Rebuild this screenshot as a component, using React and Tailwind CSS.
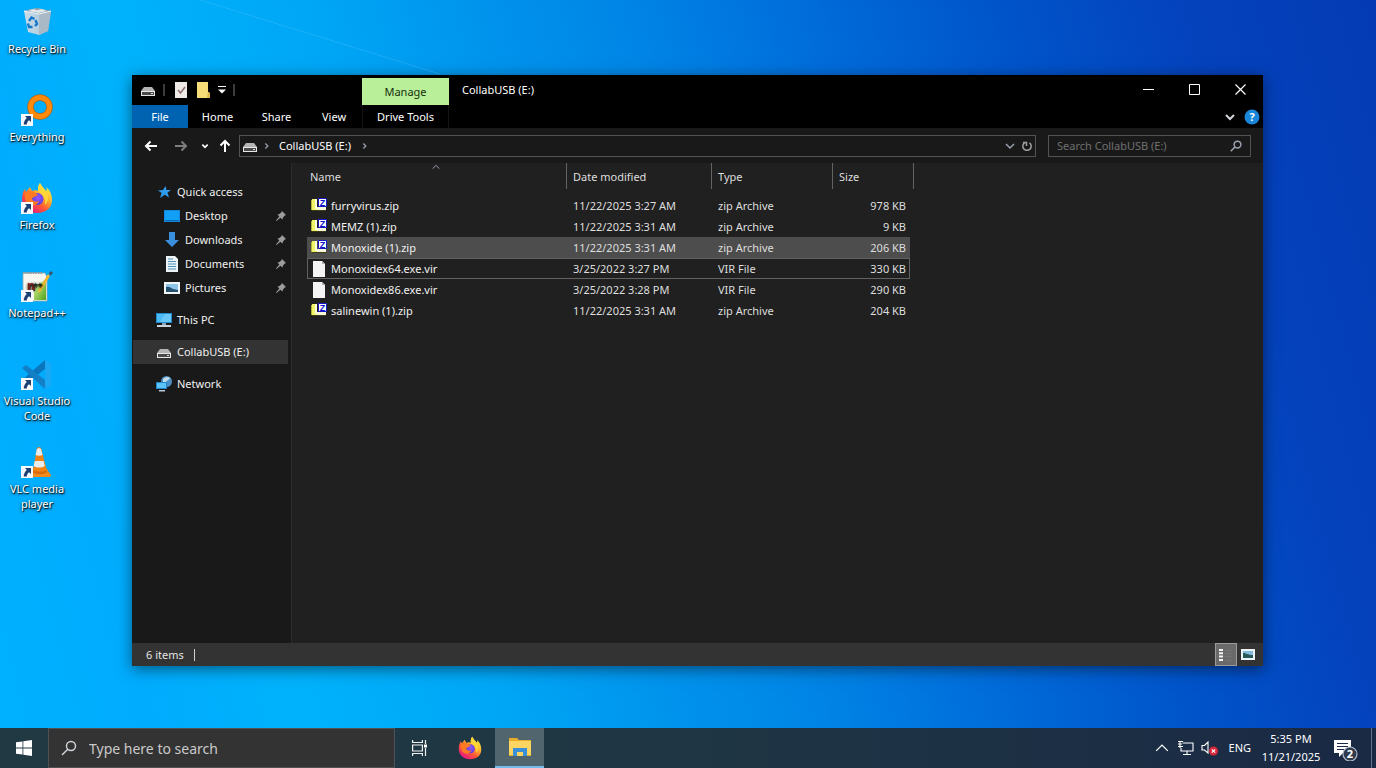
import React, { useState } from 'react';

const FILES = [
  { name: 'furryvirus.zip', modified: '11/22/2025 3:27 AM', type: 'zip Archive', size: '978 KB', icon: 'zip' },
  { name: 'MEMZ (1).zip', modified: '11/22/2025 3:31 AM', type: 'zip Archive', size: '9 KB', icon: 'zip' },
  { name: 'Monoxide (1).zip', modified: '11/22/2025 3:31 AM', type: 'zip Archive', size: '206 KB', icon: 'zip' },
  { name: 'Monoxidex64.exe.vir', modified: '3/25/2022 3:27 PM', type: 'VIR File', size: '330 KB', icon: 'blank' },
  { name: 'Monoxidex86.exe.vir', modified: '3/25/2022 3:28 PM', type: 'VIR File', size: '290 KB', icon: 'blank' },
  { name: 'salinewin (1).zip', modified: '11/22/2025 3:31 AM', type: 'zip Archive', size: '204 KB', icon: 'zip' },
];

/* ---------- desktop icons ---------- */

function RecycleBinIcon() {
  return (
    <svg viewBox="0 0 32 32" className="h-8 w-8">
      <defs>
        <linearGradient id="bin" x1="0" x2="1">
          <stop offset="0" stopColor="#c9dcea" />
          <stop offset="0.6" stopColor="#b4cede" />
          <stop offset="1" stopColor="#93a9b8" />
        </linearGradient>
      </defs>
      <path d="M3 5l13-3 14 3-3 20-9 4-11-3z" fill="url(#bin)" />
      <path d="M3 5l13-3 14 3-12 3z" fill="#7d98a8" />
      <path d="M7 5l5-2 4 1 5-1 5 2-8 2z" fill="#dfe7ea" />
      <path d="M18 8l12-3-3 20-9 4z" fill="#a9bac6" />
      <path d="M3 5l15 3 12-3" fill="none" stroke="#eef5f8" />
      <path d="M8 15l2.500-3.500 3 1.500M14.500 14l1.500 4-2 2M11.500 21H8l-1-3.500" fill="none" stroke="#1577c9" strokeWidth="2.400" />
    </svg>
  );
}

function EverythingIcon() {
  return (
    <svg viewBox="0 0 32 32" className="h-8 w-8">
      <circle cx="19" cy="13" r="9.500" fill="none" stroke="#a8661d" strokeWidth="6.500" />
      <circle cx="19" cy="13" r="9.500" fill="none" stroke="#ff8a0a" strokeWidth="5" />
    </svg>
  );
}

function FirefoxIcon({ id, className }) {
  const shell = `${id}-shell`;
  const core = `${id}-core`;
  return (
    <svg viewBox="0 0 32 32" className={className}>
      <defs>
        <linearGradient id={shell} x1="0.850" y1="0.050" x2="0.200" y2="0.950">
          <stop offset="0" stopColor="#fff44f" />
          <stop offset="0.350" stopColor="#ffb52a" />
          <stop offset="0.650" stopColor="#ff5636" />
          <stop offset="1" stopColor="#e31587" />
        </linearGradient>
        <radialGradient id={core} cx="0.550" cy="0.400" r="0.600">
          <stop offset="0" stopColor="#9059ff" />
          <stop offset="1" stopColor="#5b3ed6" />
        </radialGradient>
      </defs>
      <path
        d="M19 1c1 3 4 5 6 8 1-1 1-3 0-4 4 3 6 8 6 13 0 8-6 13-15 13S1 25 1 17c0-4 1-8 3-10l1 3 4-5 2 4c2-1 5-1 6 0 0-3 0-6 2-8z"
        fill={`url(#${shell})`}
      />
      <circle cx="16.500" cy="17" r="6" fill={`url(#${core})`} />
      <path d="M4 11c3-2 6-3 9-1l4 3c-2 2-5 1-6 4 1 3 5 3 7 2-2 5-8 6-12 2-2-3-3-6-2-10z" fill="#ff7a22" />
      <path d="M19 1c1 3 4 5 6 8 3 5 3 10-1 14 1-6-2-10-7-14 0-3 0-6 2-8z" fill="#ffd83a" opacity="0.850" />
    </svg>
  );
}

function NotepadIcon() {
  return (
    <svg viewBox="0 0 32 32" className="h-8 w-8">
      <defs>
        <linearGradient id="npp" x1="0" y1="0" x2="1" y2="1">
          <stop offset="0" stopColor="#e9f59a" />
          <stop offset="1" stopColor="#4da41c" />
        </linearGradient>
      </defs>
      <path d="M2 3h22l2 4v24H2z" fill="#f7f7f2" stroke="#9aa7a7" strokeWidth="0.800" />
      <path d="M13 18l12-9v21H13z" fill="url(#npp)" />
      <path d="M2 3h20" stroke="#9b9b9b" strokeWidth="2" strokeDasharray="1.500 1" />
      <path d="M27 4l2 2-9 15-3 2 1-4z" fill="#f2b632" />
      <path d="M28 3l2-2 2 2-3 3z" fill="#37536b" />
      <text x="6" y="20" fontSize="12" fontWeight="bold" fill="#7a1d1d" fontFamily="Noto Sans">n</text>
      <text x="12" y="18" fontSize="8" fontWeight="bold" fill="#1b3b1b" fontFamily="Noto Sans">++</text>
    </svg>
  );
}

function VsCodeIcon() {
  return (
    <svg viewBox="0 0 32 32" className="h-8 w-8">
      <path d="M24 2l6 3v23l-6 3z" fill="#39a5ea" opacity="0.450" />
      <path d="M24 2v9L6 25l-5-3z" fill="#0b76bd" />
      <path d="M1 10l4-3 19 15v9z" fill="#127fc6" />
    </svg>
  );
}

function VlcIcon() {
  return (
    <svg viewBox="0 0 32 32" className="h-8 w-8">
      <path d="M6 25l3-3h16l5 7-1 2H7z" fill="#f28a1c" />
      <path d="M16 2l2-1 2 1 6 23c-4 3-11 3-14 0z" fill="#f18316" />
      <path d="M14.500 9l1.500-6 2-1 2 1 1.500 6c-2 1-5 1-7 0zM12.500 20l1.300-5h8.700l1.300 5c-3 2-8.300 2-11.300 0z" fill="#e9ecec" />
      <path d="M11 26l.6-2c3 2 11 2 14 0l.6 2c-3 3-12 3-15.200 0z" fill="#d96a0b" />
    </svg>
  );
}

function ShortcutBadge() {
  return (
    <svg viewBox="0 0 12 12" className="absolute bottom-0 left-0 h-3 w-3">
      <path d="M0 0h12v12H0z" fill="#f6f8fb" />
      <path d="M4 2h6v6L8.200 6.300C6.600 7.300 6 8.500 5.800 10.500H2.800C2.600 8 4 5.500 5.800 4z" fill="#1d4074" />
    </svg>
  );
}

const SHORTCUTS = [
  { label: 'Recycle Bin', icon: <RecycleBinIcon />, link: false },
  { label: 'Everything', icon: <EverythingIcon />, link: true },
  { label: 'Firefox', icon: <FirefoxIcon id="desk" className="h-8 w-8" />, link: true },
  { label: 'Notepad++', icon: <NotepadIcon />, link: true },
  { label: 'Visual Studio Code', icon: <VsCodeIcon />, link: true },
  { label: 'VLC media player', icon: <VlcIcon />, link: true },
];

/* ---------- explorer icons ---------- */

function DriveIcon() {
  return (
    <svg viewBox="0 0 16 16" className="h-4 w-4 shrink-0">
      <path d="M4 5h8l3 4H1z" fill="#b4b4b4" />
      <path d="M1 9h14v5H1z" fill="#e8e8e8" />
      <path d="M2 10h12v3H2z" fill="#4a4a4a" />
      <path d="M11 11h2v1h-2z" fill="#dcdcdc" />
    </svg>
  );
}

function ZipIcon() {
  return (
    <svg viewBox="0 0 16 16" className="h-4 w-4 shrink-0">
      <path d="M1 1h5v11H1z" fill="#f2f268" />
      <path d="M0 2h1v10H0z" fill="#b5b53c" />
      <path d="M4 1h2v10H4z" fill="#fdfde0" />
      <path d="M6 9h9v3H6z" fill="#f6f6d8" />
      <path d="M1 12h14v1H1z" fill="#3c3c18" />
      <path d="M7.500.5h8v8h-8z" fill="#fff" stroke="#1616c4" strokeWidth="1" />
      <text x="11.500" y="7.500" fontSize="9" fontWeight="bold" fill="#1010c8" textAnchor="middle" fontFamily="Liberation Sans">Z</text>
    </svg>
  );
}

function BlankFileIcon() {
  return (
    <svg viewBox="0 0 16 16" className="h-4 w-4 shrink-0">
      <path d="M2 0h9l3 3v13H2z" fill="#f4f4f4" />
      <path d="M11 0l3 3h-3z" fill="#b4b4b4" />
    </svg>
  );
}

function StarIcon() {
  return (
    <svg viewBox="0 0 16 16" className="h-4 w-4 shrink-0">
      <path d="M9.500 2l1 4H15l-3.500 2.600L13 13.500 8.800 10.700 4 14l1.600-5L2 6.400l5-.3z" fill="#2f9bea" />
    </svg>
  );
}

function DesktopIcon() {
  return (
    <svg viewBox="0 0 16 16" className="h-4 w-4 shrink-0">
      <path d="M0 2h16v12H0z" fill="#1488dd" />
      <path d="M1 3h14v9H1z" fill="#12a0f6" />
      <path d="M1 12h14v1H1z" fill="#0a69b4" />
    </svg>
  );
}

function DownloadsIcon() {
  return (
    <svg viewBox="0 0 16 16" className="h-4 w-4 shrink-0">
      <path d="M5 0h6v8h4l-7 7-7-7h4z" fill="#3a8fdc" />
    </svg>
  );
}

function DocumentsIcon() {
  return (
    <svg viewBox="0 0 16 16" className="h-4 w-4 shrink-0">
      <path d="M2 0h9l3 3v13H2z" fill="#eef3f6" />
      <path d="M4 3h5M4 5.500h8M4 8h8M4 10.500h8M4 13h8" stroke="#4a90b8" strokeWidth="1.200" />
    </svg>
  );
}

function PicturesIcon() {
  return (
    <svg viewBox="0 0 16 16" className="h-4 w-4 shrink-0">
      <path d="M0 2h16v12H0z" fill="#f1f5f8" />
      <path d="M2 4h12v8H2z" fill="#8cc4ea" />
      <path d="M2 7c3-1 5 1 7 2l5 1v2H2z" fill="#25506e" />
    </svg>
  );
}

function PcIcon() {
  return (
    <svg viewBox="0 0 16 16" className="h-4 w-4 shrink-0">
      <path d="M0 1h16v10H0z" fill="#1f8ad0" />
      <path d="M1 2h14v8H1z" fill="#4cb9f3" />
      <path d="M9 2h6v8H4z" fill="#7fd0fa" opacity="0.600" />
      <path d="M6 11h4v2H6z" fill="#8aa5b5" />
      <path d="M1 13h14v2H1z" fill="#c9d3d8" />
    </svg>
  );
}

function NetworkIcon() {
  return (
    <svg viewBox="0 0 16 16" className="h-4 w-4 shrink-0">
      <circle cx="10.500" cy="5.500" r="5.500" fill="#4c8fc4" />
      <path d="M7 3c2-2 5-3 7-1-1 2-3 2-4 4H7z" fill="#c3dcec" />
      <path d="M0 6h11v7H0z" fill="#1f84cc" />
      <path d="M1 7h9v5H1z" fill="#5cc3f7" />
      <path d="M3 14h6v1.500H3z" fill="#b9c9d2" />
    </svg>
  );
}

function PinIcon() {
  return (
    <svg viewBox="0 0 12 12" className="h-3 w-3 shrink-0">
      <path d="M7 1l4 4-1.200.6L8 7.500l-.5 2L5.400 7.700 1.500 11l-.5-.5 3.300-3.900L2.500 4.500l2-.5 1.900-1.800z" fill="#9c9c9c" />
    </svg>
  );
}

function Chevron({ className, d = 'M2 4l4 4 4-4', weight = 1.5 }) {
  return (
    <svg viewBox="0 0 12 12" className={className} fill="none" stroke="currentColor" strokeWidth={weight}>
      <path d={d} />
    </svg>
  );
}

function ArrowIcon({ d, className }) {
  return (
    <svg viewBox="0 0 16 16" className={className} fill="none" stroke="currentColor" strokeWidth="2">
      <path d={d} />
    </svg>
  );
}

function SearchIcon({ className, weight }) {
  return (
    <svg viewBox="0 0 16 16" className={className} fill="none" stroke="currentColor" strokeWidth={weight}>
      <circle cx="10" cy="6" r="4.500" />
      <path d="M6.800 9.200L1 15" />
    </svg>
  );
}

const FILE_ICONS = { zip: <ZipIcon />, blank: <BlankFileIcon /> };

const QUICK_ACCESS = [
  { label: 'Desktop', icon: <DesktopIcon /> },
  { label: 'Downloads', icon: <DownloadsIcon /> },
  { label: 'Documents', icon: <DocumentsIcon /> },
  { label: 'Pictures', icon: <PicturesIcon /> },
];

function TitleBar() {
  return (
    <header className="flex bg-black text-white">
      <div className="flex h-[30px] w-[230px] items-center pl-2">
        <DriveIcon />
        <span className="ml-[7px] h-3 w-[2px] bg-[#3c3c3c]" />
        <button aria-label="Properties" className="ml-[9px]">
          <svg viewBox="0 0 14 16" className="h-4 w-[14px]">
            <path d="M1 0h12v16H1z" fill="#eeeae8" />
            <path d="M4 8l2.500 3L11 5" fill="none" stroke="#8c6f6c" strokeWidth="1.500" />
          </svg>
        </button>
        <button aria-label="New folder" className="ml-2">
          <svg viewBox="0 0 14 16" className="h-4 w-[14px]">
            <path d="M1 0h11v10l2 1v5H1z" fill="#f7dd77" />
            <path d="M12 10l2 1v5h-3z" fill="#e0b94c" />
          </svg>
        </button>
        <button aria-label="Customize Quick Access Toolbar" className="ml-[7px]">
          <svg viewBox="0 0 10 10" className="h-[10px] w-[10px]">
            <path d="M1 1.500h8" stroke="#fff" />
            <path d="M1 4.500h8L5 8.500z" fill="#fff" />
          </svg>
        </button>
        <span className="ml-[6px] h-3 w-[2px] bg-[#3c3c3c]" />
      </div>
      <div className="flex w-[87px] items-end">
        <button className="h-[27px] w-full bg-[#b9ef98] text-[#15300c]">Manage</button>
      </div>
      <h1 className="flex-1 pt-[7px] pl-[13px]">CollabUSB (E:)</h1>
      <div className="flex h-[28px]">
        <button aria-label="Minimize" className="flex w-[46px] items-center justify-center">
          <svg viewBox="0 0 11 11" className="h-[11px] w-[11px]" stroke="#fff"><path d="M0 5.500h11" /></svg>
        </button>
        <button aria-label="Maximize" className="flex w-[46px] items-center justify-center">
          <svg viewBox="0 0 11 11" className="h-[11px] w-[11px]" fill="none" stroke="#fff"><path d="M.5.5h10v10H.5z" /></svg>
        </button>
        <button aria-label="Close" className="flex w-[46px] items-center justify-center">
          <svg viewBox="0 0 11 11" className="h-[11px] w-[11px]" stroke="#fff" strokeWidth="1.200"><path d="M.5.5l10 10M10.500.5l-10 10" /></svg>
        </button>
      </div>
    </header>
  );
}

function RibbonTabs() {
  return (
    <div className="flex h-[23px] items-stretch bg-black text-white">
      <button className="w-14 bg-[#0063b1]">File</button>
      <button className="w-[59px]">Home</button>
      <button className="w-[59px]">Share</button>
      <button className="w-14">View</button>
      <button className="w-[87px] border-x border-[#141414]">Drive Tools</button>
      <div className="flex flex-1 items-center justify-end gap-2 pr-[3px]">
        <button aria-label="Expand the Ribbon"><Chevron className="h-3 w-3 text-gray-300" weight={2} /></button>
        <button aria-label="Help">
          <svg viewBox="0 0 16 16" className="h-4 w-4">
            <circle cx="8" cy="8" r="7.500" fill="#1a86d9" />
            <text x="8" y="12" fontSize="11" fontWeight="bold" fill="#fff" textAnchor="middle" fontFamily="Noto Sans">?</text>
          </svg>
        </button>
      </div>
    </div>
  );
}

function AddressBar() {
  return (
    <div className="flex h-[35px] items-center bg-[#191919] pr-3 pl-[11px] text-white">
      <button aria-label="Back"><ArrowIcon className="h-4 w-4" d="M14 8H3M7.500 3.500L3 8l4.500 4.500" /></button>
      <button aria-label="Forward" className="ml-[14px] text-[#7d7d7d]"><ArrowIcon className="h-4 w-4" d="M2 8h11M8.500 3.500L13 8l-4.500 4.500" /></button>
      <button aria-label="Recent locations" className="ml-3"><Chevron className="h-2 w-2" weight={2.5} /></button>
      <button aria-label="Up" className="ml-2"><ArrowIcon className="h-4 w-4" d="M8 14V3M3.500 7.500L8 3l4.500 4.500" /></button>
      <nav aria-label="Address" className="ml-[6px] flex h-[22px] flex-1 items-center border border-[#535353] px-[2px]">
        <DriveIcon />
        <Chevron className="ml-1 h-[10px] w-[10px] text-gray-400" d="M4 3l3 3-3 3" />
        <a href="#drive" className="ml-[7px]">CollabUSB (E:)</a>
        <Chevron className="ml-[9px] h-[10px] w-[10px] text-gray-400" d="M4 3l3 3-3 3" />
        <button aria-label="Previous locations" className="ml-auto"><Chevron className="h-3 w-3 text-gray-400" /></button>
        <button aria-label="Refresh" className="ml-[5px]">
          <svg viewBox="0 0 12 12" className="h-3 w-3" fill="none" stroke="#a0a0a0" strokeWidth="1.500">
            <path d="M8.500 2.800a4.200 4.200 0 1 1-5 0M2 2.500h3.500V6" />
          </svg>
        </button>
      </nav>
      <label className="ml-3 flex h-[22px] w-[203px] items-center border border-[#535353] pr-2 pl-2 text-[#8a8a8a]">
        <input
          type="search"
          aria-label="Search CollabUSB (E:)"
          placeholder="Search CollabUSB (E:)"
          className="min-w-0 flex-1 bg-transparent outline-none placeholder:text-[#6f6f6f]"
        />
        <SearchIcon className="h-3 w-3 text-gray-400" weight={2} />
      </label>
    </div>
  );
}

function Sidebar() {
  return (
    <nav aria-label="Navigation pane" className="flex w-40 shrink-0 flex-col border-r border-[#2b2b2b] bg-[#191919] pt-[17px] pr-[3px] pl-px text-[#f0f0f0]">
      <a href="#quick" className="flex h-6 items-center gap-[5px] pl-[23px]"><StarIcon />Quick access</a>
      {QUICK_ACCESS.map((item) => (
        <a key={item.label} href={`#${item.label}`} className="flex h-6 items-center gap-[5px] pr-px pl-[31px]">
          {item.icon}
          <span className="flex-1">{item.label}</span>
          <PinIcon />
        </a>
      ))}
      <a href="#pc" className="mt-2 flex h-6 items-center gap-[5px] pl-[23px]"><PcIcon />This PC</a>
      <a href="#drive" className="mt-2 flex h-6 items-center gap-[5px] bg-[#333333] pl-[23px]"><DriveIcon />CollabUSB (E:)</a>
      <a href="#network" className="mt-2 flex h-6 items-center gap-[5px] pl-[23px]"><NetworkIcon />Network</a>
    </nav>
  );
}

function FileTable() {
  const [selected, setSelected] = useState('Monoxide (1).zip');
  const focused = 'Monoxidex64.exe.vir';

  const rowStyle = (name) => {
    if (name === selected) return 'bg-[#4d4d4d]';
    if (name === focused) return 'outline -outline-offset-1 outline-[#626262]';
    return '';
  };

  return (
    <div className="min-w-0 flex-1 overflow-hidden bg-[#202020] pl-[15px] text-[#dedede]">
      <table className="w-[607px] table-fixed border-collapse text-left">
        <colgroup>
          <col className="w-[259px]" />
          <col className="w-[145px]" />
          <col className="w-[121px]" />
          <col className="w-[82px]" />
        </colgroup>
        <thead>
          <tr>
            <th className="relative h-8 p-0 pb-[6px] font-normal">
              <Chevron className="absolute -top-px left-[124px] h-[10px] w-[10px] text-gray-400" d="M2 8l4-4 4 4" weight={1.2} />
              <div className="h-[26px] pl-[3px] leading-[28px]">Name</div>
            </th>
            <th className="h-8 p-0 pb-[6px] font-normal"><div className="h-[26px] border-l border-[#636363] pl-[6px] leading-[28px]">Date modified</div></th>
            <th className="h-8 p-0 pb-[6px] font-normal"><div className="h-[26px] border-l border-[#636363] pl-[6px] leading-[28px]">Type</div></th>
            <th className="h-8 p-0 pb-[6px] font-normal"><div className="h-[26px] border-x border-[#636363] pl-[6px] leading-[28px]">Size</div></th>
          </tr>
        </thead>
      </table>
      <table aria-label="Files" className="w-[603px] table-fixed border-collapse text-left">
        <colgroup>
          <col className="w-[259px]" />
          <col className="w-[145px]" />
          <col className="w-[121px]" />
          <col className="w-[78px]" />
        </colgroup>
        <tbody>
          {FILES.map((file) => (
            <tr
              key={file.name}
              onClick={() => setSelected(file.name)}
              className={`h-[21px] ${rowStyle(file.name)}`}
            >
              <td className="p-0">
                <div className="flex items-center gap-1 pl-1 text-[#f0f0f0]">{FILE_ICONS[file.icon]}{file.name}</div>
              </td>
              <td className="p-0 pl-[7px]">{file.modified}</td>
              <td className="p-0 pl-[7px]">{file.type}</td>
              <td className="p-0 pr-1 text-right">{file.size}</td>
            </tr>
          ))}
        </tbody>
      </table>
    </div>
  );
}

function StatusBar() {
  return (
    <footer className="flex h-[23px] items-center bg-[#333333] pl-[14px] text-[#e4e4e4]">
      <span>6 items</span>
      <span className="ml-[10px] h-3 w-px bg-[#d0d0d0]" />
      <button aria-label="Details view" className="ml-auto flex h-[23px] w-[22px] items-center justify-center border border-[#9a9a9a] bg-[#6a6a6a]">
        <svg viewBox="0 0 14 12" className="h-3 w-[14px]" fill="#f5f5f5">
          <path d="M0 0h4v2H0zM0 3.300h4v2H0zM0 6.600h4v2H0zM0 10h4v2H0z" />
          <path d="M6 1h7v.5H6zM6 4h7v.5H6zM6 7.500h7V8H6zM6 11h7v.5H6z" fill="#808080" />
        </svg>
      </button>
      <button aria-label="Large icons view" className="flex h-[23px] w-[26px] items-center pl-1">
        <svg viewBox="0 0 14 12" className="h-3 w-[14px]">
          <path d="M0 0h14v11H0z" fill="#eef3f6" />
          <path d="M2 2h10v7H2z" fill="#83b9dc" />
          <path d="M2 4c3 0 5 2 10 2v3H2z" fill="#285a58" />
        </svg>
      </button>
    </footer>
  );
}

function Explorer() {
  return (
    <section className="mt-[75px] mr-[113px] mb-[62px] ml-[58px] flex min-w-0 flex-1 flex-col bg-[#191919] text-[11px] leading-4 shadow-[0_3px_14px_rgba(0,0,0,0.5)]">
      <TitleBar />
      <RibbonTabs />
      <AddressBar />
      <div className="flex min-h-0 flex-1">
        <Sidebar />
        <FileTable />
      </div>
      <StatusBar />
    </section>
  );
}

/* ---------- taskbar ---------- */

function Taskbar() {
  return (
    <footer className="flex h-10 items-stretch bg-linear-to-r from-[#203942] via-[#1f3644] to-[#1a2944] text-white">
      <button aria-label="Start" className="flex w-12 items-center justify-center">
        <svg viewBox="0 0 16 16" className="h-4 w-4" fill="#fff">
          <path d="M0 2.300l6.500-.9v6.200H0zM7.300 1.300L16 0v7.600H7.300zM0 8.400h6.500v6.200L0 13.700zM7.300 8.400H16V16l-8.700-1.300z" />
        </svg>
      </button>
      <label className="flex w-[347px] items-center gap-3 border border-[#4d5256] bg-[#333333] pl-3 text-gray-300">
        <SearchIcon className="h-4 w-4" weight={1.4} />
        <input
          type="search"
          aria-label="Type here to search"
          placeholder="Type here to search"
          className="min-w-0 flex-1 bg-transparent text-[14px] outline-none placeholder:text-[#cacaca]"
        />
      </label>
      <button aria-label="Task View" className="flex w-[50px] items-center justify-center">
        <svg viewBox="0 0 16 16" className="h-4 w-4" fill="none" stroke="#f0f0f0" strokeWidth="1.200">
          <path d="M.6 0v2.500h9.800V0M.6 5h9.800v6H.6zM.6 16v-2.500h9.800V16M13.500 0v4M13.500 8v8" />
          <path d="M12 4.500h3v3h-3z" fill="#fff" stroke="none" />
        </svg>
      </button>
      <button aria-label="Firefox" className="flex w-[50px] items-center justify-center">
        <FirefoxIcon id="bar" className="h-6 w-6" />
      </button>
      <button aria-label="File Explorer" className="flex w-[49px] items-center justify-center border-b-2 border-[#76b9ed] bg-[#51656f]">
        <svg viewBox="0 0 24 20" className="h-5 w-6">
          <path d="M1 1h8l2 2h12v16H1z" fill="#e6ad2c" />
          <path d="M1 4h22v14H1z" fill="#fcd462" />
          <path d="M5 11h14v8H5z" fill="#3b8fd6" />
          <path d="M9 15h6v4H9z" fill="#fcd462" />
        </svg>
      </button>
      <div className="ml-auto flex items-center text-[11px] leading-[18px]">
        <button aria-label="Show hidden icons"><Chevron className="h-[14px] w-[14px]" d="M1 8.500l5-5 5 5" weight={1.1} /></button>
        <button aria-label="Network" className="ml-2">
          <svg viewBox="0 0 18 16" className="h-4 w-[18px]" fill="none" stroke="#fff" strokeWidth="1.100">
            <path d="M5.500 3H16v8H4V8M1 1.500h5M1 4h4M1 6.500h5M3 1v7M10 11v3M6 14.500h8" />
          </svg>
        </button>
        <button aria-label="Volume muted" className="ml-[6px]">
          <svg viewBox="0 0 18 16" className="h-4 w-[18px]">
            <path d="M1 5.500h2.500L7 2v11L3.500 10H1z" fill="none" stroke="#fff" strokeWidth="1.100" />
            <circle cx="12.500" cy="11" r="4.500" fill="#d9273c" />
            <path d="M10.800 9.300l3.400 3.400M14.200 9.300l-3.400 3.400" stroke="#fff" strokeWidth="1.200" />
          </svg>
        </button>
        <button className="ml-[10px]">ENG</button>
        <button className="ml-[9px] w-[62px] text-center">
          <time className="block">5:35 PM</time>
          <time className="block">11/21/2025</time>
        </button>
        <button aria-label="2 new notifications" className="ml-[11px]">
          <svg viewBox="0 0 26 26" className="h-[26px] w-[26px]">
            <path d="M1 5h17v13h-8l-4 4v-4H1z" fill="#fff" />
            <path d="M4 8.500h11M4 11.500h11M4 14.500h7" stroke="#1a2944" />
            <circle cx="17" cy="19" r="7" fill="#2f3a4d" stroke="#b5bcc8" strokeWidth="1.200" />
            <text x="17" y="23" fontSize="11" fontWeight="bold" fill="#fff" textAnchor="middle" fontFamily="Noto Sans">2</text>
          </svg>
        </button>
        <button aria-label="Show desktop" className="ml-3 h-10 w-[5px] border-l border-[#66728a]" />
      </div>
    </footer>
  );
}

export default function App() {
  return (
    <div className="flex h-screen flex-col overflow-hidden bg-[linear-gradient(75deg,#00b2ff_0%,#00acfe_10%,#00b2fb_20%,#00a6f6_33%,#0092ec_44%,#0086e6_52%,#006cda_64%,#0054ca_76%,#0442bc_88%,#043bb4_100%)] font-['Noto_Sans','Open_Sans',sans-serif]">
      <main className="relative flex min-h-0 flex-1">
        {/* faint wallpaper ray */}
        <svg viewBox="0 0 240 74" className="absolute top-0 left-[200px] h-[74px] w-60" fill="none">
          <path d="M0 0l240 74" stroke="#5cc8ff" opacity="0.300" />
        </svg>
        <div className="flex w-[74px] shrink-0 flex-col pt-[6px]">
          {SHORTCUTS.map((item) => (
            <a
              key={item.label}
              href={`#${item.label}`}
              className="flex h-[88px] flex-col items-center gap-[3px] text-center text-[11px] leading-[15px] text-white text-shadow-[1px_1px_1px_rgba(0,0,0,0.8),0_1px_3px_rgba(0,0,0,0.9)]"
            >
              <span className="relative">
                {item.icon}
                {item.link && <ShortcutBadge />}
              </span>
              {item.label}
            </a>
          ))}
        </div>
        <Explorer />
      </main>
      <Taskbar />
    </div>
  );
}
